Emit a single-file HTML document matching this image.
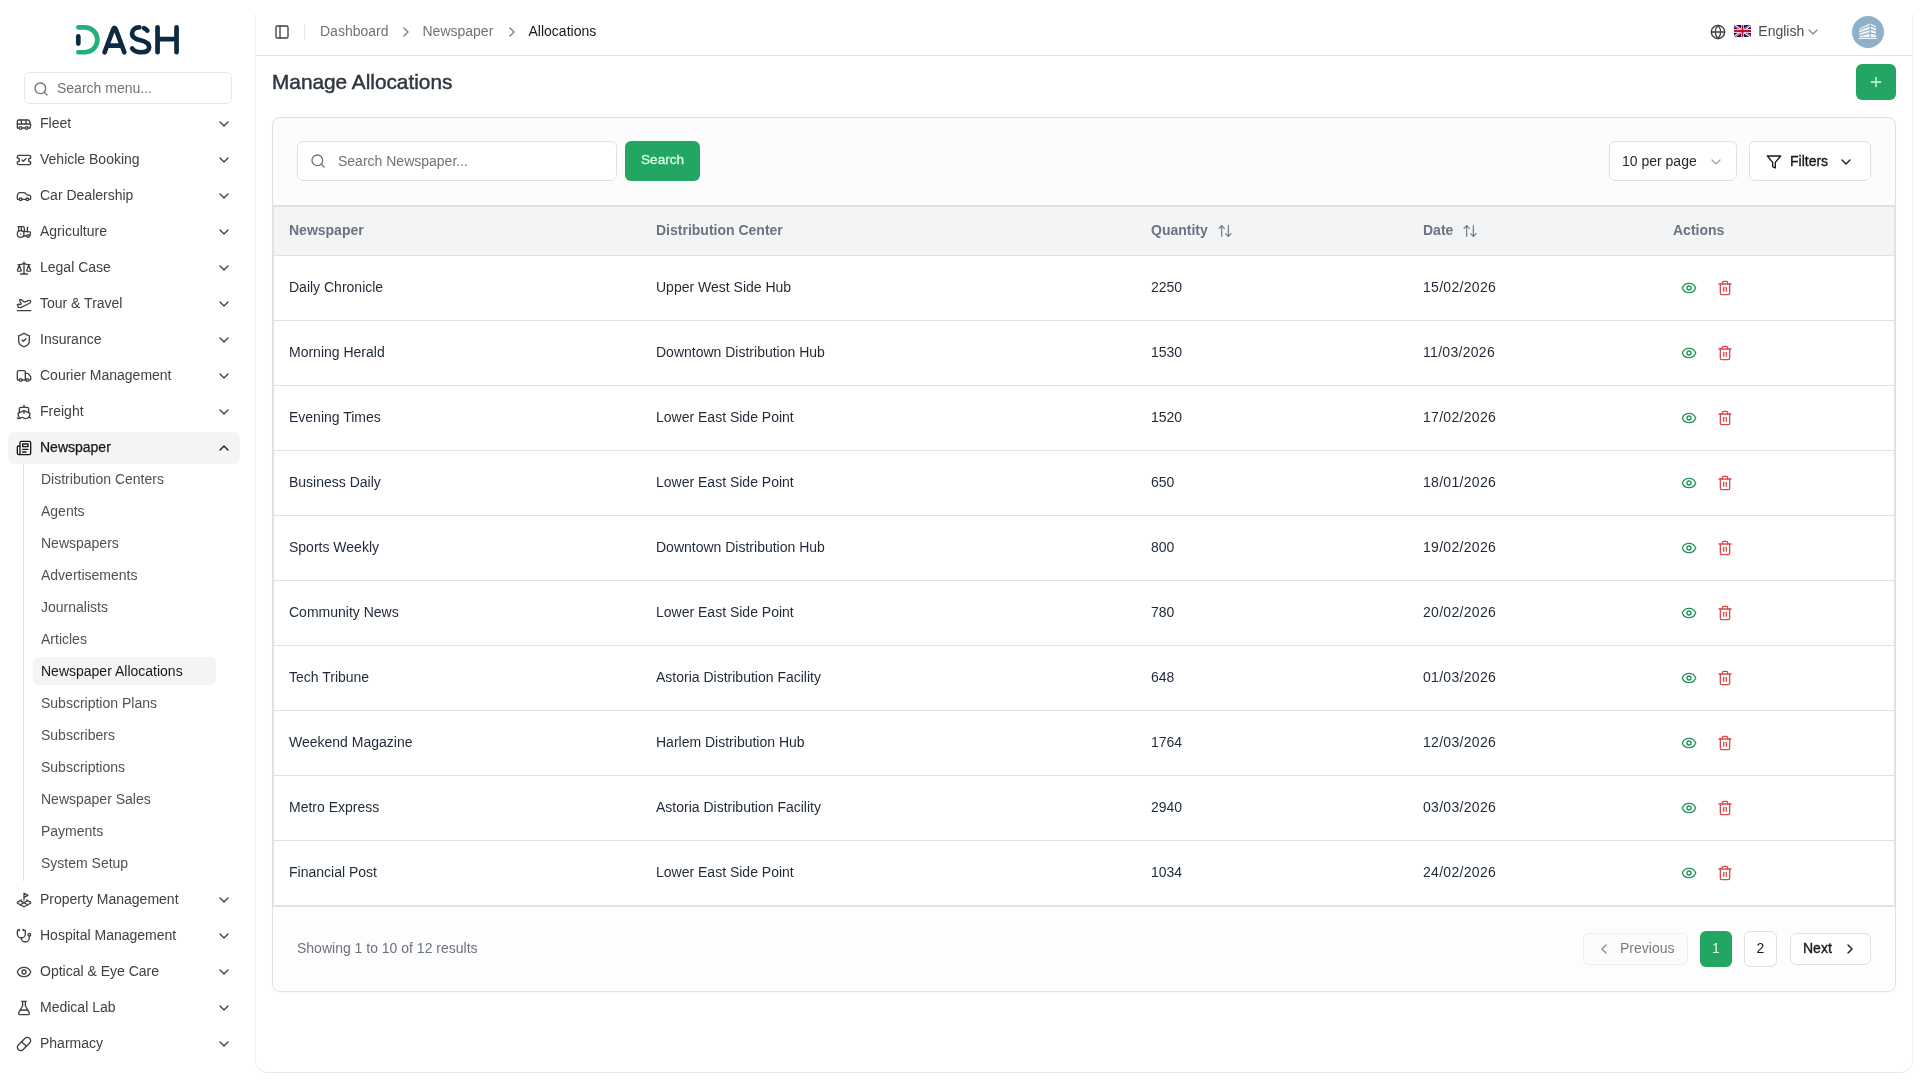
<!DOCTYPE html>
<html><head><meta charset="utf-8">
<style>
*{box-sizing:border-box;margin:0;padding:0}
html,body{width:1920px;height:1080px;overflow:hidden;background:#fff;-webkit-font-smoothing:antialiased;font-family:"Liberation Sans",sans-serif;color:#1f2937}
.abs{position:absolute}
svg.i{position:absolute;fill:none;stroke:currentColor;stroke-width:2;stroke-linecap:round;stroke-linejoin:round}
#side{position:absolute;left:0;top:0;width:256px;height:1080px;background:#fff}
.msearch{position:absolute;left:24px;top:72px;width:208px;height:32px;border:1px solid #e5e7eb;border-radius:6px;background:#fff}
.msearch span{position:absolute;left:32px;top:5px;font-size:14px;line-height:20px;color:#71717a}
.mi{position:absolute;left:8px;width:232px;height:32px;border-radius:6px;color:#404045}
.mi .t{position:absolute;left:32px;top:5px;font-size:14px;line-height:20px;white-space:nowrap}
.mi.act{background:#f4f4f5;color:#18181b}
.mi.act .t{-webkit-text-stroke:0.25px #18181b}
.sub{position:absolute;left:23px;top:464px;width:1px;height:417px;background:#e1e1e1}
.si{position:absolute;left:33px;width:183px;height:28px;border-radius:6px;color:#505055}
.si .t{position:absolute;left:8px;top:4px;font-size:14px;line-height:20px;white-space:nowrap}
.si.act{background:#f4f4f5;color:#18181b}
#main{position:absolute;left:256px;top:8px;width:1656px;height:1064px;border-radius:12px;background:#fff;}
#medge{position:absolute;left:255px;top:14px;width:1658px;height:1059px;border:1px solid #f1f1f1;border-bottom-color:#e9e9e9;border-top:none;border-radius:0 0 13px 13px;pointer-events:none}
.hdr{position:absolute;left:0;top:0;width:1656px;height:48px;border-bottom:1px solid #e1e1e1}
.bc{position:absolute;top:14px;font-size:14px;line-height:20px;color:#71717a;white-space:nowrap}
.title{position:absolute;left:272px;top:68px;font-size:20.8px;line-height:28px;color:#2f3640;white-space:nowrap;-webkit-text-stroke:0.45px #2f3640}
.card{position:absolute;left:272px;top:117px;width:1624px;height:875px;border:1px solid #e1e1e1;border-radius:8px;background:#fcfcfc;overflow:hidden;box-shadow:0 1px 2px rgba(0,0,0,.03)}
.inp{position:absolute;border:1px solid #e1e1e1;border-radius:6px;background:#fff}
.btn-g{position:absolute;background:#23a664;border-radius:6px;color:#dcfce7}
table{position:absolute;left:0;top:88px;width:1622px;border-collapse:collapse;background:#fff}
th{height:49px;background:#f3f4f6;border-top:1px solid #e1e1e1;border-bottom:1px solid #e1e1e1;padding-bottom:2px !important;text-align:left;font-size:14px;font-weight:bold;color:#6b7280;padding:0 0 0 16px;white-space:nowrap}
td{height:65px;border-bottom:1px solid #e1e1e1;padding-bottom:2px !important;font-size:14px;color:#1f2937;padding:0 0 0 16px;white-space:nowrap}
td:nth-child(4){letter-spacing:0.3px}
</style></head><body>
<div id="side" style="will-change:transform">
  <svg class="abs" style="left:70px;top:20px" width="115" height="40" viewBox="70 20 115 40">
    <g fill="none" stroke-linecap="round" stroke-linejoin="round" stroke-width="4.7">
      <path d="M78.35 27.35H84.9A12.45 12.45 0 0 1 84.9 52.25H78.35" stroke="#22b07a"/>
      <path d="M78.3 36.4V43.6" stroke="#0d2b40"/>
      <path d="M104.6 52.25L113.2 29.2Q114.5 26.6 115.8 29.2L124.3 52.25M109.4 45.7H119.6" stroke="#0d2b40"/>
      <path d="M139.3 27.35C134.9 27.35 132.05 30.1 132.05 33.7C132.05 37.5 135.5 39.1 140.5 40.2C145.8 41.4 149.15 43.4 149.15 47.2C149.15 50.8 145.6 52.25 140.6 52.25C136.8 52.25 133.8 50.8 132.2 48.5" stroke="#0d2b40"/>
      <path d="M143.9 28.1C145.4 28.7 146.6 29.6 147.3 30.6" stroke="#0d2b40"/>
      <path d="M157.55 27.35V52.25M176.55 27.35V52.25M157.55 39.2H176.55" stroke="#0d2b40"/>
    </g>
  </svg>
  <div class="msearch"><svg class="i" style="left:8px;top:8px;color:#71717a" width="16" height="16" viewBox="0 0 24 24"><circle cx="11" cy="11" r="8"/><path d="m21 21-4.3-4.3"/></svg><span>Search menu...</span></div>
  <!-- items injected below -->
  <div class="mi" style="top:108px"><svg class="i" style="left:8px;top:8px;" width="16" height="16" viewBox="0 0 24 24" stroke-width="2"><path d="M8 6v6"/><path d="M15 6v6"/><path d="M2 12h19.6"/><path d="M18 18h3s.5-1.7.8-2.8c.1-.4.2-.8.2-1.2 0-.4-.1-.8-.2-1.2l-1.4-5C20.1 6.8 19.1 6 18 6H4a2 2 0 0 0-2 2v10h3"/><circle cx="7" cy="18" r="2"/><path d="M9 18h5"/><circle cx="16" cy="18" r="2"/></svg><span class="t">Fleet</span><svg class="i" style="left:208px;top:8px;" width="16" height="16" viewBox="0 0 24 24" stroke-width="2"><path d="m6 9 6 6 6-6"/></svg></div>
<div class="mi" style="top:144px"><svg class="i" style="left:8px;top:8px;" width="16" height="16" viewBox="0 0 24 24" stroke-width="2"><path d="M2 9a3 3 0 0 1 0 6v2a2 2 0 0 0 2 2h16a2 2 0 0 0 2-2v-2a3 3 0 0 1 0-6V7a2 2 0 0 0-2-2H4a2 2 0 0 0-2 2Z"/><path d="m9 12 2 2 4-4"/></svg><span class="t">Vehicle Booking</span><svg class="i" style="left:208px;top:8px;" width="16" height="16" viewBox="0 0 24 24" stroke-width="2"><path d="m6 9 6 6 6-6"/></svg></div>
<div class="mi" style="top:180px"><svg class="i" style="left:8px;top:8px;" width="16" height="16" viewBox="0 0 24 24" stroke-width="2"><path d="M19 17h2c.6 0 1-.4 1-1v-3c0-.9-.7-1.7-1.5-1.9C18.7 10.6 16 10 16 10s-1.3-1.4-2.2-2.3c-.5-.4-1.1-.7-1.8-.7H5c-.6 0-1.1.4-1.4.9l-1.4 2.9A3.7 3.7 0 0 0 2 12v4c0 .6.4 1 1 1h2"/><circle cx="7" cy="17" r="2"/><path d="M9 17h6"/><circle cx="17" cy="17" r="2"/></svg><span class="t">Car Dealership</span><svg class="i" style="left:208px;top:8px;" width="16" height="16" viewBox="0 0 24 24" stroke-width="2"><path d="m6 9 6 6 6-6"/></svg></div>
<div class="mi" style="top:216px"><svg class="i" style="left:8px;top:8px;" width="16" height="16" viewBox="0 0 24 24" stroke-width="2"><path d="m10 11 11 .9a1 1 0 0 1 .8 1.1l-.665 4.158a1 1 0 0 1-.988.842H20"/><path d="M16 18h-5"/><path d="M18 5a1 1 0 0 0-1 1v5.573"/><path d="M3 4h8.129a1 1 0 0 1 .99.863L13 11.246"/><path d="M4 11V4"/><path d="M7 15h.01"/><path d="M8 10.1V4"/><circle cx="18" cy="18" r="2"/><circle cx="7" cy="15" r="5"/></svg><span class="t">Agriculture</span><svg class="i" style="left:208px;top:8px;" width="16" height="16" viewBox="0 0 24 24" stroke-width="2"><path d="m6 9 6 6 6-6"/></svg></div>
<div class="mi" style="top:252px"><svg class="i" style="left:8px;top:8px;" width="16" height="16" viewBox="0 0 24 24" stroke-width="2"><path d="m16 16 3-8 3 8c-.87.65-1.92 1-3 1s-2.13-.35-3-1Z"/><path d="m2 16 3-8 3 8c-.87.65-1.92 1-3 1s-2.13-.35-3-1Z"/><path d="M7 21h10"/><path d="M12 3v18"/><path d="M3 7h2c2 0 5-1 7-2 2 1 5 2 7 2h2"/></svg><span class="t">Legal Case</span><svg class="i" style="left:208px;top:8px;" width="16" height="16" viewBox="0 0 24 24" stroke-width="2"><path d="m6 9 6 6 6-6"/></svg></div>
<div class="mi" style="top:288px"><svg class="i" style="left:8px;top:8px;" width="16" height="16" viewBox="0 0 24 24" stroke-width="2"><path d="M2 22h20"/><path d="M6.36 17.4 4 17l-2-4 1.1-.55a2 2 0 0 1 1.8 0l.17.1a2 2 0 0 0 1.8 0L8 12 5 6l.9-.45a2 2 0 0 1 2.09.2l4.02 3a2 2 0 0 0 2.1.2l4.19-2.06a2.41 2.41 0 0 1 1.73-.17L21 7a1.4 1.4 0 0 1 .87 1.99l-.38.76c-.23.46-.6.84-1.07 1.08L7.58 17.2a2 2 0 0 1-1.22.18Z"/></svg><span class="t">Tour &amp; Travel</span><svg class="i" style="left:208px;top:8px;" width="16" height="16" viewBox="0 0 24 24" stroke-width="2"><path d="m6 9 6 6 6-6"/></svg></div>
<div class="mi" style="top:324px"><svg class="i" style="left:8px;top:8px;" width="16" height="16" viewBox="0 0 24 24" stroke-width="2"><path d="M20 13c0 5-3.5 7.5-7.66 8.95a1 1 0 0 1-.67-.01C7.5 20.5 4 18 4 13V6a1 1 0 0 1 1-1c2 0 4.5-1.2 6.24-2.72a1.17 1.17 0 0 1 1.52 0C14.51 3.81 17 5 19 5a1 1 0 0 1 1 1z"/><path d="m9 12 2 2 4-4"/></svg><span class="t">Insurance</span><svg class="i" style="left:208px;top:8px;" width="16" height="16" viewBox="0 0 24 24" stroke-width="2"><path d="m6 9 6 6 6-6"/></svg></div>
<div class="mi" style="top:360px"><svg class="i" style="left:8px;top:8px;" width="16" height="16" viewBox="0 0 24 24" stroke-width="2"><path d="M14 18V6a2 2 0 0 0-2-2H4a2 2 0 0 0-2 2v11a1 1 0 0 0 1 1h2"/><path d="M15 18H9"/><path d="M19 18h2a1 1 0 0 0 1-1v-3.65a1 1 0 0 0-.22-.624l-3.48-4.35A1 1 0 0 0 17.52 8H14"/><circle cx="17" cy="18" r="2"/><circle cx="7" cy="18" r="2"/></svg><span class="t">Courier Management</span><svg class="i" style="left:208px;top:8px;" width="16" height="16" viewBox="0 0 24 24" stroke-width="2"><path d="m6 9 6 6 6-6"/></svg></div>
<div class="mi" style="top:396px"><svg class="i" style="left:8px;top:8px;" width="16" height="16" viewBox="0 0 24 24" stroke-width="2"><path d="M12 10.189V14"/><path d="M12 2v3"/><path d="M19 13V7a2 2 0 0 0-2-2H7a2 2 0 0 0-2 2v6"/><path d="M19.38 20A11.6 11.6 0 0 0 21 14l-8.188-3.639a2 2 0 0 0-1.624 0L3 14a11.6 11.6 0 0 0 2.81 7.76"/><path d="M2 21c.6.5 1.2 1 2.5 1 2.5 0 2.5-2 5-2 1.3 0 1.9.5 2.5 1s1.2 1 2.5 1c2.5 0 2.5-2 5-2 1.3 0 1.9.5 2.5 1"/></svg><span class="t">Freight</span><svg class="i" style="left:208px;top:8px;" width="16" height="16" viewBox="0 0 24 24" stroke-width="2"><path d="m6 9 6 6 6-6"/></svg></div>
<div class="mi act" style="top:432px"><svg class="i" style="left:8px;top:8px;" width="16" height="16" viewBox="0 0 24 24" stroke-width="2"><path d="M4 22h16a2 2 0 0 0 2-2V4a2 2 0 0 0-2-2H8a2 2 0 0 0-2 2v16a2 2 0 0 1-2 2Zm0 0a2 2 0 0 1-2-2v-9c0-1.1.9-2 2-2h2"/><path d="M18 14h-8"/><path d="M15 18h-5"/><path d="M10 6h8v4h-8V6Z"/></svg><span class="t">Newspaper</span><svg class="i" style="left:208px;top:8px;" width="16" height="16" viewBox="0 0 24 24" stroke-width="2"><path d="m18 15-6-6-6 6"/></svg></div>
<div class="sub"></div>
<div class="si" style="top:465px"><span class="t">Distribution Centers</span></div>
<div class="si" style="top:497px"><span class="t">Agents</span></div>
<div class="si" style="top:529px"><span class="t">Newspapers</span></div>
<div class="si" style="top:561px"><span class="t">Advertisements</span></div>
<div class="si" style="top:593px"><span class="t">Journalists</span></div>
<div class="si" style="top:625px"><span class="t">Articles</span></div>
<div class="si act" style="top:657px"><span class="t">Newspaper Allocations</span></div>
<div class="si" style="top:689px"><span class="t">Subscription Plans</span></div>
<div class="si" style="top:721px"><span class="t">Subscribers</span></div>
<div class="si" style="top:753px"><span class="t">Subscriptions</span></div>
<div class="si" style="top:785px"><span class="t">Newspaper Sales</span></div>
<div class="si" style="top:817px"><span class="t">Payments</span></div>
<div class="si" style="top:849px"><span class="t">System Setup</span></div>
<div class="mi" style="top:884px"><svg class="i" style="left:8px;top:8px;" width="16" height="16" viewBox="0 0 24 24" stroke-width="2"><path d="m12 8 6-3-6-3v10"/><path d="m8 11.99-5.5 3.14a1 1 0 0 0 0 1.74l8.5 4.86a2 2 0 0 0 2 0l8.5-4.86a1 1 0 0 0 0-1.74L16 12"/><path d="m6.49 12.85 11.02 6.3"/><path d="M17.51 12.85 6.5 19.15"/></svg><span class="t">Property Management</span><svg class="i" style="left:208px;top:8px;" width="16" height="16" viewBox="0 0 24 24" stroke-width="2"><path d="m6 9 6 6 6-6"/></svg></div>
<div class="mi" style="top:920px"><svg class="i" style="left:8px;top:8px;" width="16" height="16" viewBox="0 0 24 24" stroke-width="2"><path d="M11 2v2"/><path d="M5 2v2"/><path d="M5 3H4a2 2 0 0 0-2 2v4a6 6 0 0 0 12 0V5a2 2 0 0 0-2-2h-1"/><path d="M8 15a6 6 0 0 0 12 0v-3"/><circle cx="20" cy="10" r="2"/></svg><span class="t">Hospital Management</span><svg class="i" style="left:208px;top:8px;" width="16" height="16" viewBox="0 0 24 24" stroke-width="2"><path d="m6 9 6 6 6-6"/></svg></div>
<div class="mi" style="top:956px"><svg class="i" style="left:8px;top:8px;" width="16" height="16" viewBox="0 0 24 24" stroke-width="2"><path d="M2.062 12.348a1 1 0 0 1 0-.696 10.75 10.75 0 0 1 19.876 0 1 1 0 0 1 0 .696 10.75 10.75 0 0 1-19.876 0"/><circle cx="12" cy="12" r="3"/></svg><span class="t">Optical &amp; Eye Care</span><svg class="i" style="left:208px;top:8px;" width="16" height="16" viewBox="0 0 24 24" stroke-width="2"><path d="m6 9 6 6 6-6"/></svg></div>
<div class="mi" style="top:992px"><svg class="i" style="left:8px;top:8px;" width="16" height="16" viewBox="0 0 24 24" stroke-width="2"><path d="M14 2v6a2 2 0 0 0 .245.96l5.51 10.08A2 2 0 0 1 18 22H6a2 2 0 0 1-1.755-2.96l5.51-10.08A2 2 0 0 0 10 8V2"/><path d="M6.453 15h11.094"/><path d="M8.5 2h7"/></svg><span class="t">Medical Lab</span><svg class="i" style="left:208px;top:8px;" width="16" height="16" viewBox="0 0 24 24" stroke-width="2"><path d="m6 9 6 6 6-6"/></svg></div>
<div class="mi" style="top:1028px"><svg class="i" style="left:8px;top:8px;" width="16" height="16" viewBox="0 0 24 24" stroke-width="2"><path d="m10.5 20.5 10-10a4.95 4.95 0 1 0-7-7l-10 10a4.95 4.95 0 1 0 7 7Z"/><path d="m8.5 8.5 7 7"/></svg><span class="t">Pharmacy</span><svg class="i" style="left:208px;top:8px;" width="16" height="16" viewBox="0 0 24 24" stroke-width="2"><path d="m6 9 6 6 6-6"/></svg></div>
</div>
<div id="medge"></div>
<div id="main" style="will-change:transform">
  <div class="hdr"></div>
<svg class="i" style="left:17.5px;top:16px;color:#3f3f46;" width="16" height="16" viewBox="0 0 24 24" stroke-width="2"><rect width="18" height="18" x="3" y="3" rx="2"/><path d="M9 3v18"/></svg>
<div class="abs" style="left:48px;top:16px;width:1px;height:16px;background:#e5e7eb"></div>
<span class="bc" style="left:64px;top:13px">Dashboard</span>
<svg class="i" style="left:142px;top:16px;color:#808080;" width="16" height="16" viewBox="0 0 24 24" stroke-width="1.3"><path d="m9 18 6-6-6-6"/></svg>
<span class="bc" style="left:166.5px;top:13px">Newspaper</span>
<svg class="i" style="left:248px;top:16px;color:#808080;" width="16" height="16" viewBox="0 0 24 24" stroke-width="1.3"><path d="m9 18 6-6-6-6"/></svg>
<span class="bc" style="left:272.5px;top:13px;color:#18181b">Allocations</span>
<svg class="i" style="left:1454px;top:16px;color:#3f3f46;" width="16" height="16" viewBox="0 0 24 24" stroke-width="2"><circle cx="12" cy="12" r="10"/><path d="M12 2a14.5 14.5 0 0 0 0 20 14.5 14.5 0 0 0 0-20"/><path d="M2 12h20"/></svg>
<svg class="abs" style="left:1478px;top:17px" width="17" height="12" viewBox="0 0 60 30" preserveAspectRatio="none"><clipPath id="fc"><path d="M0 0v30h60V0z"/></clipPath><clipPath id="ft"><path d="M30 15h30v15zv15H0zH0V0zV0h30z"/></clipPath><g clip-path="url(#fc)"><path d="M0 0v30h60V0z" fill="#012169"/><path d="M0 0l60 30m0-30L0 30" stroke="#fff" stroke-width="6"/><path d="M0 0l60 30m0-30L0 30" clip-path="url(#ft)" stroke="#C8102E" stroke-width="4"/><path d="M30 0v30M0 15h60" stroke="#fff" stroke-width="10"/><path d="M30 0v30M0 15h60" stroke="#C8102E" stroke-width="6"/></g></svg>
<span class="bc" style="left:1502.3px;top:13px;color:#4a4a50">English</span>
<svg class="i" style="left:1548.5px;top:16px;color:#8a8a8a;" width="16" height="16" viewBox="0 0 24 24" stroke-width="1.3"><path d="m6 9 6 6 6-6"/></svg>
<div class="abs" style="left:1596px;top:8px;width:32px;height:32px;border-radius:50%;background:#8eb0c8;overflow:hidden">
<svg class="abs" style="left:0;top:0" width="32" height="32" viewBox="0 0 32 32">
<path d="M7.2 12.6 L18.2 7.2 L24 10.2 V21.2 H7.2Z" fill="#eef7fb"/>
<g stroke="#8eb0c8" stroke-width="1.1" fill="none">
<path d="M6 14.6 L18.2 9.6"/><path d="M6 17.6 L18.2 13.2"/><path d="M6 20.2 L18.2 16.9"/>
<path d="M18.2 9.6 L25 12.4"/><path d="M18.2 13.2 L25 15.4"/><path d="M18.2 16.9 L25 18.6"/>
<path d="M18.2 7 V21.5" stroke-width="1.2"/>
</g>
<path d="M6.4 21.9 H24.9 V23.1 H6.4Z" fill="#eef7fb"/>
</svg></div>
<div class="title" style="left:16px;top:60px">Manage Allocations</div>
<div class="btn-g" style="left:1600px;top:56px;width:40px;height:36px"><svg class="i" style="left:12px;top:10px;color:#dcfce7;" width="16" height="16" viewBox="0 0 24 24" stroke-width="1.6"><path d="M5 12h14"/><path d="M12 5v14"/></svg></div>
<div class="card" style="left:16px;top:109px"><div class="inp" style="left:24px;top:23px;width:320px;height:40px"><svg class="i" style="left:12px;top:11px;color:#6b7280;" width="16" height="16" viewBox="0 0 24 24" stroke-width="2"><circle cx="11" cy="11" r="8"/><path d="m21 21-4.3-4.3"/></svg><span class="abs" style="left:40px;top:9px;font-size:14px;line-height:20px;color:#71717a;white-space:nowrap">Search Newspaper...</span></div>
<div class="btn-g" style="left:352px;top:23px;width:75px;height:40px"><span class="abs" style="left:16px;top:9px;font-size:13.6px;line-height:20px;white-space:nowrap;-webkit-text-stroke:0.3px #dcfce7">Search</span></div>
<div class="inp" style="left:1336px;top:23px;width:128px;height:40px"><span class="abs" style="left:12px;top:9px;font-size:14px;line-height:20px;color:#27272a;white-space:nowrap">10 per page</span><svg class="i" style="left:98px;top:12px;color:#9ca3af;" width="16" height="16" viewBox="0 0 24 24" stroke-width="1.5"><path d="m6 9 6 6 6-6"/></svg></div>
<div class="inp" style="left:1476px;top:23px;width:122px;height:40px"><svg class="i" style="left:16px;top:12px;color:#18181b;" width="16" height="16" viewBox="0 0 24 24" stroke-width="2"><path d="M22 3H2l8 9.46V19l4 2v-8.54L22 3z"/></svg><span class="abs" style="left:40px;top:9px;font-size:14px;line-height:20px;color:#18181b;white-space:nowrap;-webkit-text-stroke:0.35px #18181b">Filters</span><svg class="i" style="left:88px;top:12px;color:#18181b;" width="16" height="16" viewBox="0 0 24 24" stroke-width="2"><path d="m6 9 6 6 6-6"/></svg></div>
<table><colgroup><col style="width:367px"><col style="width:495px"><col style="width:272px"><col style="width:250px"><col></colgroup><thead><tr><th>Newspaper</th><th>Distribution Center</th><th>Quantity<svg width="16" height="16" viewBox="0 0 24 24" style="vertical-align:-4px;margin-left:9px;fill:none;stroke:#6b7280;stroke-width:1.7;stroke-linecap:round;stroke-linejoin:round"><path d="m21 16-4 4-4-4"/><path d="M17 20V4"/><path d="m3 8 4-4 4 4"/><path d="M7 4v16"/></svg></th><th>Date<svg width="16" height="16" viewBox="0 0 24 24" style="vertical-align:-4px;margin-left:9px;fill:none;stroke:#6b7280;stroke-width:1.7;stroke-linecap:round;stroke-linejoin:round"><path d="m21 16-4 4-4-4"/><path d="M17 20V4"/><path d="m3 8 4-4 4 4"/><path d="M7 4v16"/></svg></th><th>Actions</th></tr></thead><tbody><tr><td>Daily Chronicle</td><td>Upper West Side Hub</td><td>2250</td><td>15/02/2026</td><td><div style="position:relative;height:16px"><svg class="i" style="left:8px;top:1px;color:#1f9254;" width="16" height="16" viewBox="0 0 24 24" stroke-width="1.8"><path d="M2.062 12.348a1 1 0 0 1 0-.696 10.75 10.75 0 0 1 19.876 0 1 1 0 0 1 0 .696 10.75 10.75 0 0 1-19.876 0"/><circle cx="12" cy="12" r="3"/></svg><svg class="i" style="left:44px;top:1px;color:#dc4a4a;" width="16" height="16" viewBox="0 0 24 24" stroke-width="1.8"><path d="M3 6h18"/><path d="M19 6v14c0 1-1 2-2 2H7c-1 0-2-1-2-2V6"/><path d="M8 6V4c0-1 1-2 2-2h4c1 0 2 1 2 2v2"/><line x1="10" x2="10" y1="11" y2="17"/><line x1="14" x2="14" y1="11" y2="17"/></svg></div></td></tr><tr><td>Morning Herald</td><td>Downtown Distribution Hub</td><td>1530</td><td>11/03/2026</td><td><div style="position:relative;height:16px"><svg class="i" style="left:8px;top:1px;color:#1f9254;" width="16" height="16" viewBox="0 0 24 24" stroke-width="1.8"><path d="M2.062 12.348a1 1 0 0 1 0-.696 10.75 10.75 0 0 1 19.876 0 1 1 0 0 1 0 .696 10.75 10.75 0 0 1-19.876 0"/><circle cx="12" cy="12" r="3"/></svg><svg class="i" style="left:44px;top:1px;color:#dc4a4a;" width="16" height="16" viewBox="0 0 24 24" stroke-width="1.8"><path d="M3 6h18"/><path d="M19 6v14c0 1-1 2-2 2H7c-1 0-2-1-2-2V6"/><path d="M8 6V4c0-1 1-2 2-2h4c1 0 2 1 2 2v2"/><line x1="10" x2="10" y1="11" y2="17"/><line x1="14" x2="14" y1="11" y2="17"/></svg></div></td></tr><tr><td>Evening Times</td><td>Lower East Side Point</td><td>1520</td><td>17/02/2026</td><td><div style="position:relative;height:16px"><svg class="i" style="left:8px;top:1px;color:#1f9254;" width="16" height="16" viewBox="0 0 24 24" stroke-width="1.8"><path d="M2.062 12.348a1 1 0 0 1 0-.696 10.75 10.75 0 0 1 19.876 0 1 1 0 0 1 0 .696 10.75 10.75 0 0 1-19.876 0"/><circle cx="12" cy="12" r="3"/></svg><svg class="i" style="left:44px;top:1px;color:#dc4a4a;" width="16" height="16" viewBox="0 0 24 24" stroke-width="1.8"><path d="M3 6h18"/><path d="M19 6v14c0 1-1 2-2 2H7c-1 0-2-1-2-2V6"/><path d="M8 6V4c0-1 1-2 2-2h4c1 0 2 1 2 2v2"/><line x1="10" x2="10" y1="11" y2="17"/><line x1="14" x2="14" y1="11" y2="17"/></svg></div></td></tr><tr><td>Business Daily</td><td>Lower East Side Point</td><td>650</td><td>18/01/2026</td><td><div style="position:relative;height:16px"><svg class="i" style="left:8px;top:1px;color:#1f9254;" width="16" height="16" viewBox="0 0 24 24" stroke-width="1.8"><path d="M2.062 12.348a1 1 0 0 1 0-.696 10.75 10.75 0 0 1 19.876 0 1 1 0 0 1 0 .696 10.75 10.75 0 0 1-19.876 0"/><circle cx="12" cy="12" r="3"/></svg><svg class="i" style="left:44px;top:1px;color:#dc4a4a;" width="16" height="16" viewBox="0 0 24 24" stroke-width="1.8"><path d="M3 6h18"/><path d="M19 6v14c0 1-1 2-2 2H7c-1 0-2-1-2-2V6"/><path d="M8 6V4c0-1 1-2 2-2h4c1 0 2 1 2 2v2"/><line x1="10" x2="10" y1="11" y2="17"/><line x1="14" x2="14" y1="11" y2="17"/></svg></div></td></tr><tr><td>Sports Weekly</td><td>Downtown Distribution Hub</td><td>800</td><td>19/02/2026</td><td><div style="position:relative;height:16px"><svg class="i" style="left:8px;top:1px;color:#1f9254;" width="16" height="16" viewBox="0 0 24 24" stroke-width="1.8"><path d="M2.062 12.348a1 1 0 0 1 0-.696 10.75 10.75 0 0 1 19.876 0 1 1 0 0 1 0 .696 10.75 10.75 0 0 1-19.876 0"/><circle cx="12" cy="12" r="3"/></svg><svg class="i" style="left:44px;top:1px;color:#dc4a4a;" width="16" height="16" viewBox="0 0 24 24" stroke-width="1.8"><path d="M3 6h18"/><path d="M19 6v14c0 1-1 2-2 2H7c-1 0-2-1-2-2V6"/><path d="M8 6V4c0-1 1-2 2-2h4c1 0 2 1 2 2v2"/><line x1="10" x2="10" y1="11" y2="17"/><line x1="14" x2="14" y1="11" y2="17"/></svg></div></td></tr><tr><td>Community News</td><td>Lower East Side Point</td><td>780</td><td>20/02/2026</td><td><div style="position:relative;height:16px"><svg class="i" style="left:8px;top:1px;color:#1f9254;" width="16" height="16" viewBox="0 0 24 24" stroke-width="1.8"><path d="M2.062 12.348a1 1 0 0 1 0-.696 10.75 10.75 0 0 1 19.876 0 1 1 0 0 1 0 .696 10.75 10.75 0 0 1-19.876 0"/><circle cx="12" cy="12" r="3"/></svg><svg class="i" style="left:44px;top:1px;color:#dc4a4a;" width="16" height="16" viewBox="0 0 24 24" stroke-width="1.8"><path d="M3 6h18"/><path d="M19 6v14c0 1-1 2-2 2H7c-1 0-2-1-2-2V6"/><path d="M8 6V4c0-1 1-2 2-2h4c1 0 2 1 2 2v2"/><line x1="10" x2="10" y1="11" y2="17"/><line x1="14" x2="14" y1="11" y2="17"/></svg></div></td></tr><tr><td>Tech Tribune</td><td>Astoria Distribution Facility</td><td>648</td><td>01/03/2026</td><td><div style="position:relative;height:16px"><svg class="i" style="left:8px;top:1px;color:#1f9254;" width="16" height="16" viewBox="0 0 24 24" stroke-width="1.8"><path d="M2.062 12.348a1 1 0 0 1 0-.696 10.75 10.75 0 0 1 19.876 0 1 1 0 0 1 0 .696 10.75 10.75 0 0 1-19.876 0"/><circle cx="12" cy="12" r="3"/></svg><svg class="i" style="left:44px;top:1px;color:#dc4a4a;" width="16" height="16" viewBox="0 0 24 24" stroke-width="1.8"><path d="M3 6h18"/><path d="M19 6v14c0 1-1 2-2 2H7c-1 0-2-1-2-2V6"/><path d="M8 6V4c0-1 1-2 2-2h4c1 0 2 1 2 2v2"/><line x1="10" x2="10" y1="11" y2="17"/><line x1="14" x2="14" y1="11" y2="17"/></svg></div></td></tr><tr><td>Weekend Magazine</td><td>Harlem Distribution Hub</td><td>1764</td><td>12/03/2026</td><td><div style="position:relative;height:16px"><svg class="i" style="left:8px;top:1px;color:#1f9254;" width="16" height="16" viewBox="0 0 24 24" stroke-width="1.8"><path d="M2.062 12.348a1 1 0 0 1 0-.696 10.75 10.75 0 0 1 19.876 0 1 1 0 0 1 0 .696 10.75 10.75 0 0 1-19.876 0"/><circle cx="12" cy="12" r="3"/></svg><svg class="i" style="left:44px;top:1px;color:#dc4a4a;" width="16" height="16" viewBox="0 0 24 24" stroke-width="1.8"><path d="M3 6h18"/><path d="M19 6v14c0 1-1 2-2 2H7c-1 0-2-1-2-2V6"/><path d="M8 6V4c0-1 1-2 2-2h4c1 0 2 1 2 2v2"/><line x1="10" x2="10" y1="11" y2="17"/><line x1="14" x2="14" y1="11" y2="17"/></svg></div></td></tr><tr><td>Metro Express</td><td>Astoria Distribution Facility</td><td>2940</td><td>03/03/2026</td><td><div style="position:relative;height:16px"><svg class="i" style="left:8px;top:1px;color:#1f9254;" width="16" height="16" viewBox="0 0 24 24" stroke-width="1.8"><path d="M2.062 12.348a1 1 0 0 1 0-.696 10.75 10.75 0 0 1 19.876 0 1 1 0 0 1 0 .696 10.75 10.75 0 0 1-19.876 0"/><circle cx="12" cy="12" r="3"/></svg><svg class="i" style="left:44px;top:1px;color:#dc4a4a;" width="16" height="16" viewBox="0 0 24 24" stroke-width="1.8"><path d="M3 6h18"/><path d="M19 6v14c0 1-1 2-2 2H7c-1 0-2-1-2-2V6"/><path d="M8 6V4c0-1 1-2 2-2h4c1 0 2 1 2 2v2"/><line x1="10" x2="10" y1="11" y2="17"/><line x1="14" x2="14" y1="11" y2="17"/></svg></div></td></tr><tr><td>Financial Post</td><td>Lower East Side Point</td><td>1034</td><td>24/02/2026</td><td><div style="position:relative;height:16px"><svg class="i" style="left:8px;top:1px;color:#1f9254;" width="16" height="16" viewBox="0 0 24 24" stroke-width="1.8"><path d="M2.062 12.348a1 1 0 0 1 0-.696 10.75 10.75 0 0 1 19.876 0 1 1 0 0 1 0 .696 10.75 10.75 0 0 1-19.876 0"/><circle cx="12" cy="12" r="3"/></svg><svg class="i" style="left:44px;top:1px;color:#dc4a4a;" width="16" height="16" viewBox="0 0 24 24" stroke-width="1.8"><path d="M3 6h18"/><path d="M19 6v14c0 1-1 2-2 2H7c-1 0-2-1-2-2V6"/><path d="M8 6V4c0-1 1-2 2-2h4c1 0 2 1 2 2v2"/><line x1="10" x2="10" y1="11" y2="17"/><line x1="14" x2="14" y1="11" y2="17"/></svg></div></td></tr></tbody></table>
<div class="abs" style="left:0;top:87px;width:1622px;height:702px;border:1px solid #e1e1e1;border-radius:0"></div>
<div class="abs" style="left:0;top:789px;width:1622px;height:85px;background:#fdfdfd"></div>
<span class="abs" style="left:24px;top:820px;font-size:14px;line-height:20px;color:#6b7280;white-space:nowrap">Showing 1 to 10 of 12 results</span>
<div class="inp" style="left:1310px;top:815px;width:105px;height:32px;border-color:#eceef1;background:#fcfcfc"><svg class="i" style="left:12px;top:7px;color:#8a8a8a;" width="16" height="16" viewBox="0 0 24 24" stroke-width="1.6"><path d="m15 18-6-6 6-6"/></svg><span class="abs" style="left:36px;top:4px;font-size:14px;line-height:20px;color:#7a7a7a;white-space:nowrap">Previous</span></div>
<div class="btn-g" style="left:1427px;top:813px;width:32px;height:36px"><span class="abs" style="left:0;width:32px;text-align:center;top:7px;font-size:14px;line-height:20px;color:#dcfce7">1</span></div>
<div class="inp" style="left:1471px;top:813px;width:33px;height:36px"><span class="abs" style="left:0;width:31px;text-align:center;top:6px;font-size:14px;line-height:20px;color:#18181b">2</span></div>
<div class="inp" style="left:1517px;top:815px;width:81px;height:32px"><span class="abs" style="left:12px;top:4px;font-size:14px;line-height:20px;color:#18181b;white-space:nowrap;-webkit-text-stroke:0.35px #18181b">Next</span><svg class="i" style="left:51px;top:7px;color:#18181b;" width="16" height="16" viewBox="0 0 24 24" stroke-width="2"><path d="m9 18 6-6-6-6"/></svg></div></div>
</div>
</body></html>
